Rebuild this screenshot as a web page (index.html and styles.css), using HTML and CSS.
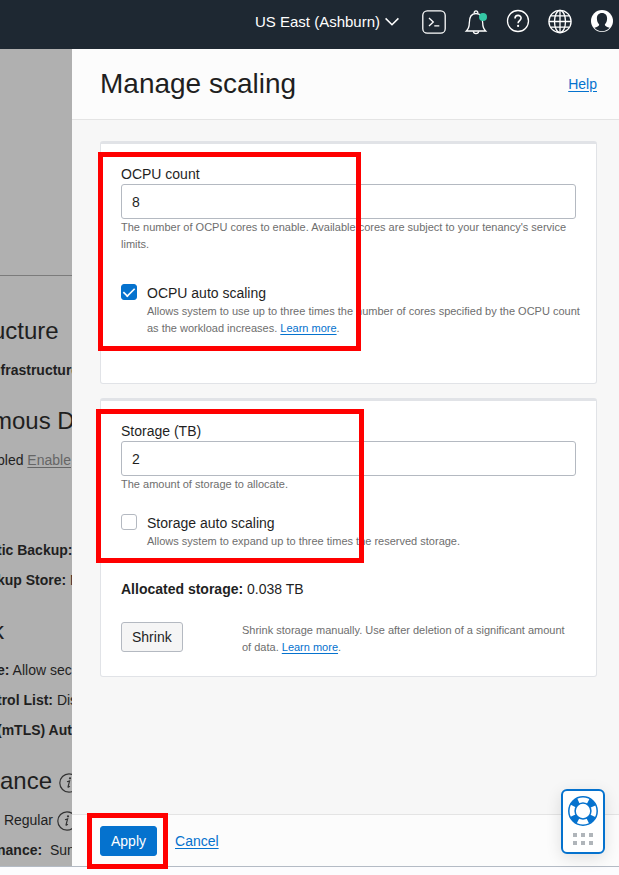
FILE: index.html
```html
<!DOCTYPE html>
<html lang="en">
<head>
<meta charset="utf-8">
<title>Manage scaling</title>
<link rel="stylesheet" href="styles.css">
</head>
<body>
<header class="topbar">
  <button class="region" type="button">US East (Ashburn)
    <svg width="14" height="10" viewBox="0 0 14 10" fill="none" stroke="currentColor" stroke-width="1.5"><path d="M.6 1.4 7 7.8l6.4-6.4"/></svg>
  </button>
  <button class="tool" type="button" aria-label="Developer tools">
    <svg viewBox="0 0 24 24" fill="none" stroke="currentColor" stroke-width="1.3"><rect x=".8" y=".8" width="22.4" height="22.4" rx="4.5"/><path d="M7 8l4.300 4L7 16M12.300 15.900h5"/></svg>
  </button>
  <button class="tool" type="button" aria-label="Announcements">
    <svg viewBox="0 0 24 24" fill="none" stroke="currentColor" stroke-width="1.3"><path d="M2.3 21c2.4-2.2 3-4.600 3-8 0-5.500 2-9.500 6.700-9.500s6.700 4 6.700 9.500c0 3.400.6 5.800 3 8z"/><path d="M10.300 3.200a1.800 1.800 0 1 1 3.400 0M9.300 21.200c.3 3.100 5.100 3.100 5.400 0"/><circle cx="19" cy="7" r="4" fill="#35c7a5" stroke="none"/></svg>
  </button>
  <button class="tool" type="button" aria-label="Help menu">
    <svg viewBox="0 0 24 24" fill="none" stroke="currentColor" stroke-width="1.3"><circle cx="12" cy="11" r="10.500"/><path d="M9 8.500c0-4.200 6.100-4 6.100-.4 0 2.500-3 2.600-3 5.200" stroke-width="1.600"/><circle cx="12.100" cy="15.900" r="1.100" fill="currentColor" stroke="none"/></svg>
  </button>
  <button class="tool" type="button" aria-label="Language">
    <svg viewBox="0 0 24 24" fill="none" stroke="currentColor" stroke-width="1.3"><circle cx="12" cy="11.500" r="11.100"/><ellipse cx="12" cy="11.500" rx="5.500" ry="11.100"/><path d="M12 .5v22M1 11.500h22M2.800 5.800h18.400M2.800 17.200h18.400"/></svg>
  </button>
  <button class="tool" type="button" aria-label="Profile">
    <svg viewBox="0 0 24 24"><circle cx="12" cy="11" r="11" fill="#fff"/><path d="M12 3c-3.300 0-5.100 2.300-5.100 5.500 0 2.500.9 4.600 2.300 5.900-.2 1.900-2.300 2.500-4.800 3.300C6.300 20 9 21.200 12 21.200s5.700-1.200 7.600-3.500c-2.500-.8-4.600-1.400-4.800-3.300 1.400-1.300 2.300-3.400 2.300-5.900C17.100 5.300 15.300 3 12 3z" fill="#1e2832"/></svg>
  </button>
</header>

<main class="stage">
  <section class="details" aria-hidden="true">
    <h2 class="line heading first tuck">ucture</h2>
    <p class="line tuck"><b>nfrastructure:</b></p>
    <h2 class="line heading tuck">mous Data</h2>
    <p class="line group-end">bled <span class="enable">Enable</span></p>
    <p class="line"><b>tic Backup:</b></p>
    <p class="line"><b>kup Store:</b> NFS</p>
    <h2 class="line heading tuck">k</h2>
    <p class="line"><b>e:</b> Allow secure</p>
    <p class="line"><b>trol List:</b> Disabled</p>
    <p class="line"><b>(mTLS) Authentication</b></p>
    <h2 class="line heading flush">ance <svg class="info" viewBox="0 0 20 20"><circle cx="10" cy="10" r="9.200"/><path d="M8 8.800l2.600-.8-1.500 5.600c-.2.900.5.900 1.700-.4"/><circle class="dot" cx="11" cy="5.300" r="1.100"/></svg></h2>
    <p class="line flush">&nbsp;Regular <svg class="info" viewBox="0 0 20 20"><circle cx="10" cy="10" r="9.200"/><path d="M8 8.800l2.600-.8-1.500 5.600c-.2.900.5.900 1.700-.4"/><circle class="dot" cx="11" cy="5.300" r="1.100"/></svg></p>
    <p class="line"><b>nance:</b> &nbsp;Sunday</p>
  </section>

  <form class="panel">
    <div class="panel-head">
      <h1>Manage scaling</h1>
      <a href="#help">Help</a>
    </div>

    <div class="panel-body">
      <section class="card card-ocpu">
        <div class="field">
          <label for="ocpu">OCPU count</label>
          <input id="ocpu" class="textbox" type="text" value="8">
          <p class="hint">The number of OCPU cores to enable. Available cores are subject to your tenancy's service limits.</p>
        </div>
        <div class="check">
          <input id="ocpu-auto" type="checkbox" checked>
          <div>
            <label for="ocpu-auto">OCPU auto scaling</label>
            <p class="hint">Allows system to use up to three times the number of cores specified by the OCPU count as the workload increases. <a href="#ocpu-more">Learn more</a>.</p>
          </div>
        </div>
        <span class="mark mark-ocpu"></span>
      </section>

      <section class="card card-storage">
        <div class="field">
          <label for="storage">Storage (TB)</label>
          <input id="storage" class="textbox" type="text" value="2">
          <p class="hint">The amount of storage to allocate.</p>
        </div>
        <div class="check">
          <input id="storage-auto" type="checkbox">
          <div>
            <label for="storage-auto">Storage auto scaling</label>
            <p class="hint">Allows system to expand up to three times the reserved storage.</p>
          </div>
        </div>
        <p class="allocated"><b>Allocated storage:</b> 0.038 TB</p>
        <div class="shrink">
          <div><button class="btn" type="button">Shrink</button></div>
          <p class="hint">Shrink storage manually. Use after deletion of a significant amount of data. <a href="#shrink-more">Learn more</a>.</p>
        </div>
        <span class="mark mark-storage"></span>
      </section>
    </div>

    <div class="panel-foot">
      <button class="btn primary" type="button">Apply</button>
      <a href="#cancel">Cancel</a>
      <span class="mark mark-apply"></span>
    </div>
  </form>

  <button class="support" type="button" aria-label="Support">
    <svg width="32" height="32" viewBox="0 0 32 32" fill="none" stroke="#0572ce"><circle cx="16" cy="16" r="11" stroke-width="6.500" stroke-dasharray="7.200 10.079" stroke-dashoffset="-5.040"/><circle cx="16" cy="16" r="14.200" stroke-width="1.500"/><circle cx="16" cy="16" r="7.900" stroke-width="1.500"/></svg>
    <svg width="20" height="12" viewBox="0 0 20 12" fill="#b0b5ba"><path d="M0 0h4v4H0zM8 0h4v4H8zM16 0h4v4h-4zM0 8h4v4H0zM8 8h4v4H8zM16 8h4v4h-4z"/></svg>
  </button>
</main>
</body>
</html>
```

FILE: styles.css
```css
* { box-sizing: border-box; }

body {
  margin: 0;
  min-height: 100vh;
  display: flex;
  flex-direction: column;
  background: #fcfcfe;
  color: #1f1f1f;
  font: 14px/20px "Liberation Sans", Arial, sans-serif;
  overflow-x: hidden;
}

h1, h2, p { margin: 0; font-weight: normal; }
button, input { font: inherit; color: inherit; margin: 0; }
a { color: #0572ce; text-underline-offset: 2px; }

.topbar {
  height: 49px;
  flex: none;
  display: flex;
  justify-content: flex-end;
  align-items: center;
  gap: 18px;
  padding: 0 5px 6px 0;
  background: #1e2832;
  color: #fff;
}
.topbar button { border: 0; padding: 0; background: none; }
.topbar .region {
  display: flex;
  align-items: center;
  gap: 5px;
  margin-right: 5px;
  font-size: 15px;
}
.tool, .tool svg { display: block; width: 24px; height: 24px; }
.tool svg { overflow: visible; }

.stage {
  position: relative;
  flex: 1;
  display: flex;
  margin-bottom: 8px;
  border-bottom: 1px solid #b4bbc5;
}

/* Dimmed page behind the panel */
.details {
  flex: none;
  width: 72px;
  padding-top: 226px;
  overflow: hidden;
  white-space: nowrap;
  background: #b0b0b0;
}
.line { line-height: 30px; height: 30px; text-indent: -3px; }
.line.tuck { text-indent: -8px; }
.line.flush { text-indent: 0; }
.heading { height: 60px; padding-top: 21px; font-size: 24px; }
.heading.first { height: 80px; padding-top: 40px; }
.details .first { border-top: 1px solid #7b7b7b; }
.group-end { margin-bottom: 60px; }
.enable { color: #666; text-decoration: underline; text-underline-offset: 2px; }
.info {
  width: 20px;
  height: 20px;
  vertical-align: middle;
  fill: none;
  stroke: #333;
  stroke-width: 1.2;
}
.info .dot { fill: #333; stroke: none; }

.panel {
  flex: 1;
  min-width: 0;
  display: flex;
  flex-direction: column;
  background: #f7f7f7;
}
.panel-head {
  display: flex;
  justify-content: space-between;
  align-items: center;
  height: 71px;
  padding: 0 22px 0 28px;
  background: #fcfcfc;
  border-bottom: 1px solid #e4e4e4;
}
.panel-head h1 { font-size: 28px; line-height: 36px; }
.panel-body {
  flex: 1;
  display: flex;
  flex-direction: column;
  gap: 14px;
  padding: 21px 22px 21px 28px;
}

.card {
  position: relative;
  padding: 20px 16px 20px 20px;
  background: #fff;
  border: 1px solid #e1e3e7;
  border-top-width: 3px;
  border-radius: 3px;
}
.card-ocpu { padding-bottom: 46px; }
.field { margin: 0 4px 20px 0; }
.card-ocpu .field { margin-bottom: 30px; }
.field label, .check label { display: block; }
.textbox {
  display: block;
  width: 100%;
  height: 35px;
  padding: 0 10px;
  background: #fff;
  border: 1px solid #b4b9c1;
  border-radius: 3px;
}
.hint { color: #6e6e6e; font-size: 11px; line-height: 17px; }
.check { display: flex; gap: 10px; }
.check input {
  appearance: none;
  flex: none;
  width: 16px;
  height: 16px;
  margin-top: 1px;
  background: #fff;
  border: 1px solid #b4b9c1;
  border-radius: 3px;
}
.check input:checked {
  display: grid;
  place-items: center;
  background: #0572ce;
  border-color: #0572ce;
}
.check input:checked::before {
  content: "";
  width: 12px;
  height: 6px;
  margin-bottom: 3px;
  border: solid #fff;
  border-width: 0 0 2px 2px;
  transform: rotate(-45deg) scale(.8);
}
.allocated { margin: 29px 0 23px; }
.shrink {
  display: grid;
  grid-template-columns: 121px 1fr;
  padding-right: 4px;
}

.btn {
  display: block;
  height: 30px;
  padding: 0 10px;
  background: #f5f5f5;
  border: 1px solid #b4b9c1;
  border-radius: 3px;
}
.btn.primary { background: #0572ce; border-color: #0572ce; color: #fff; }

.panel-foot {
  position: relative;
  display: flex;
  align-items: center;
  gap: 18px;
  height: 52px;
  padding: 0 28px;
  background: #fcfcfc;
  border-top: 1px solid #e4e4e4;
}

/* Red callout frames drawn over the form */
.mark { position: absolute; border: 5px solid #f00; pointer-events: none; }
.mark-ocpu { left: -3px; top: 8px; width: 263px; height: 199px; }
.mark-storage { left: -5px; top: 8px; width: 268px; height: 154px; }
.mark-apply { left: 15px; top: -2px; width: 81px; height: 56px; z-index: 1; }

.support {
  position: absolute;
  right: 14px;
  bottom: 12px;
  width: 44px;
  height: 65px;
  display: flex;
  flex-direction: column;
  align-items: center;
  justify-content: center;
  gap: 6px;
  padding: 0 0 4px;
  background: #fff;
  border: 2px solid #0572ce;
  border-radius: 6px;
  box-shadow: 0 4px 16px rgba(0, 0, 0, .12);
}
```
